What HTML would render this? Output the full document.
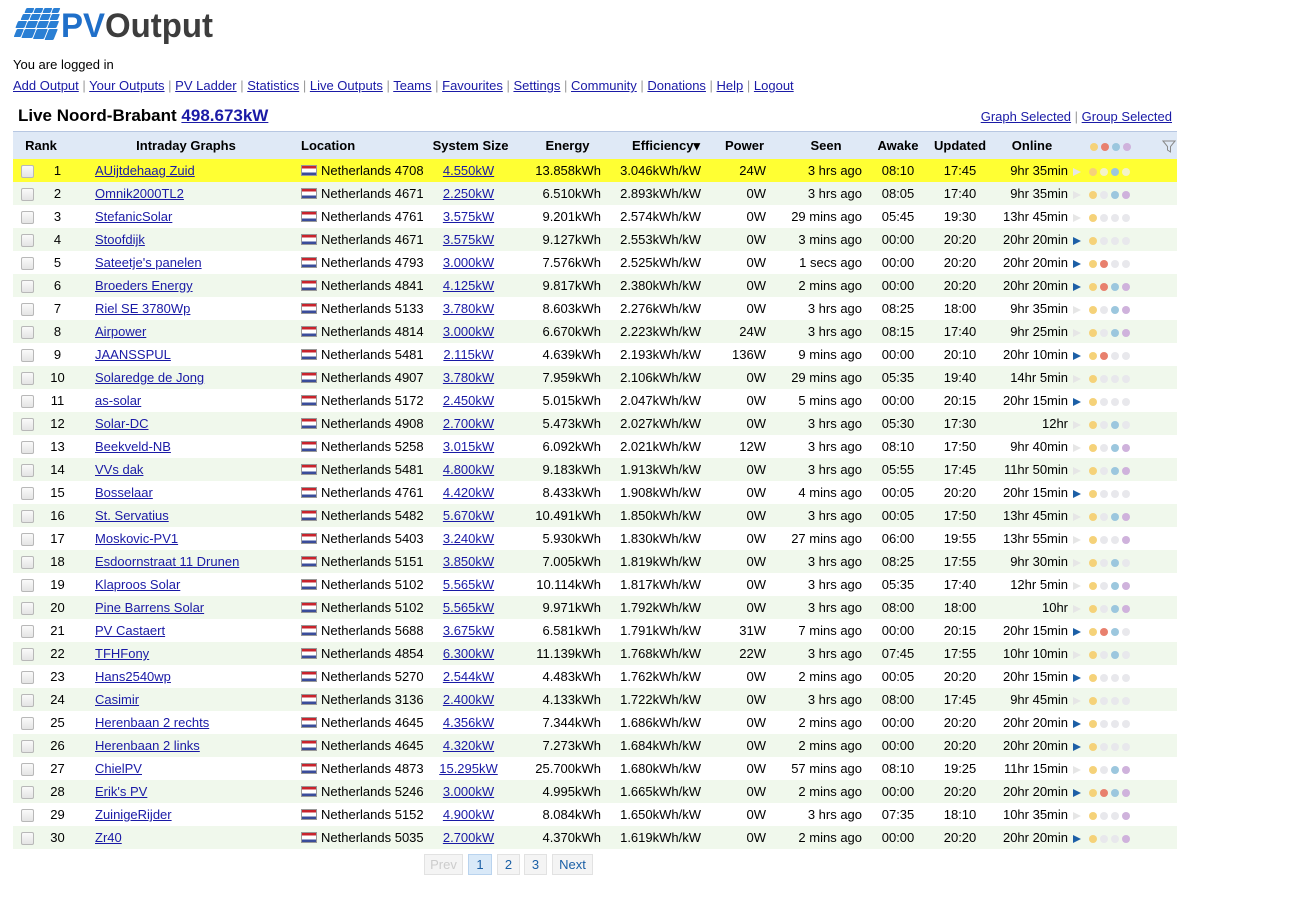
<!DOCTYPE html>
<html><head><meta charset="utf-8"><style>
body{margin:0;font-family:"Liberation Sans",Arial,sans-serif;font-size:13px;color:#000;background:#fff}
a{color:#1a1aa6}
#logo{position:absolute;left:10px;top:4px}
#logged{position:absolute;left:13px;top:57px}
#nav{position:absolute;left:13px;top:78px;color:#999}
#nav a{color:#1a1aa6}
#title{position:absolute;left:18px;top:106px;font-size:17px;font-weight:bold}
#title a{color:#1a1aa6}
#rlinks{position:absolute;right:120px;top:109px;color:#999}
table{position:absolute;left:13px;top:131px;width:1164px;border-collapse:collapse;table-layout:fixed}
th{background:#dfe9f6;height:27px;font-weight:bold;text-align:center;border-top:1px solid #b7c7e2;padding:0;font-size:13px}
td{height:23px;padding:0;white-space:nowrap;overflow:hidden}
tr:nth-child(odd) td{background:#f0f8ec}
tr.hl td{background:#ffff33!important}
.r{text-align:right;padding-right:6px}
.c{text-align:center}
.cb{display:inline-block;width:11px;height:11px;border:1px solid #b8b8b8;border-radius:2px;background:linear-gradient(#fafafa,#e4e4e4);margin-left:8px;vertical-align:middle}
.fl{display:inline-block;width:16px;height:11px;vertical-align:-1px;margin-right:4px;background:linear-gradient(#c8232c 0,#c8232c 33%,#fff 33%,#fff 66%,#3a4c9a 66%);box-shadow:0 0 0 1px #999 inset}
.ar{display:inline-block;width:0;height:0;border-left:8px solid #e6e6e6;border-top:4px solid transparent;border-bottom:4px solid transparent;margin:0 8px 0 1px;vertical-align:middle}
.ar.A{border-left-color:#1c5fa6}
.d{display:inline-block;width:8px;height:8px;border-radius:50%;margin-right:3px;vertical-align:middle;background:#e8e8ec}
.Y{background:#f5d279}.R{background:#e8806e}.B{background:#9cc7de}.P{background:#cfb2dc}
.hl .d.g{background:#f4f4c8}
#pager{position:absolute;top:854px;left:424px}
#pager span{position:absolute;top:0;height:19px;line-height:19px;border:1px solid #e2e2e2;background:#f4f4f4;text-align:center;color:#1a5fa6;font-size:13px}
</style></head><body>
<svg id="logo" width="210" height="40" viewBox="0 0 210 40">
<g transform="skewX(-22)">
<g fill="#2a7fd4">
<rect x="18" y="4" width="8" height="5" rx="1"/><rect x="27" y="4" width="8" height="5" rx="1"/><rect x="36" y="4" width="8" height="5" rx="1"/><rect x="45" y="4" width="7" height="5" rx="1"/>
<rect x="17" y="10" width="8" height="6" rx="1"/><rect x="26" y="10" width="9" height="6" rx="1"/><rect x="36" y="10" width="9" height="6" rx="1"/><rect x="46" y="10" width="8" height="6" rx="1"/>
<rect x="15" y="17" width="9" height="7" rx="1"/><rect x="25" y="17" width="10" height="7" rx="1"/><rect x="36" y="17" width="10" height="7" rx="1"/><rect x="47" y="17" width="9" height="7" rx="1"/>
<rect x="17" y="25" width="7" height="8" rx="1"/><rect x="25" y="25" width="11" height="9" rx="1"/><rect x="37" y="25" width="11" height="10" rx="1"/><rect x="49" y="25" width="9" height="11" rx="1"/>
</g></g>
<text x="51" y="33" font-family="Liberation Sans,Arial,sans-serif" font-weight="bold" font-size="34" fill="#1f6fc9" textLength="152" lengthAdjust="spacingAndGlyphs">PV<tspan fill="#3d3d3d">Output</tspan></text>
</svg>
<div id="logged">You are logged in</div>
<div id="nav"><a href="#">Add Output</a> | <a href="#">Your Outputs</a> | <a href="#">PV Ladder</a> | <a href="#">Statistics</a> | <a href="#">Live Outputs</a> | <a href="#">Teams</a> | <a href="#">Favourites</a> | <a href="#">Settings</a> | <a href="#">Community</a> | <a href="#">Donations</a> | <a href="#">Help</a> | <a href="#">Logout</a></div>
<div id="title">Live Noord-Brabant <a href="#">498.673kW</a></div>
<div id="rlinks"><a href="#">Graph Selected</a> | <a href="#">Group Selected</a></div>
<table>
<colgroup><col style="width:27px"><col style="width:35px"><col style="width:222px"><col style="width:128px"><col style="width:87px"><col style="width:95px"><col style="width:100px"><col style="width:65px"><col style="width:96px"><col style="width:60px"><col style="width:64px"><col style="width:80px"><col style="width:105px"></colgroup>
<tr><th colspan="2" style="padding-right:6px">Rank</th><th>Intraday Graphs</th><th style="text-align:left;padding-left:4px">Location</th><th style="padding-left:4px">System Size</th><th style="padding-left:16px">Energy</th><th style="padding-left:18px">Efficiency▾</th><th style="padding-left:10px">Power</th><th style="padding-left:12px">Seen</th><th>Awake</th><th>Updated</th><th>Online</th><th style="text-align:left;padding-left:18px"><span class="d Y"></span><span class="d R"></span><span class="d B"></span><span class="d P"></span><svg width="14" height="13" style="margin-left:28px;vertical-align:middle" viewBox="0 0 14 13"><path d="M1 1h12L8.5 6.5V12L5.5 10V6.5Z" fill="none" stroke="#888"/></svg></th></tr>
<tr class="hl"><td><span class="cb"></span></td><td class="c">1</td><td style="padding-left:20px"><a href="#">AUijtdehaag Zuid</a></td><td style="padding-left:4px"><span class="fl"></span>Netherlands 4708</td><td class="c"><a href="#">4.550kW</a></td><td class="r">13.858kWh</td><td class="r">3.046kWh/kW</td><td class="r">24W</td><td class="r">3 hrs ago</td><td class="c">08:10</td><td class="c">17:45</td><td class="r" style="padding-right:4px">9hr 35min</td><td><span class="ar"></span><span class="d Y"></span><span class="d g"></span><span class="d B"></span><span class="d g"></span></td></tr>
<tr><td><span class="cb"></span></td><td class="c">2</td><td style="padding-left:20px"><a href="#">Omnik2000TL2</a></td><td style="padding-left:4px"><span class="fl"></span>Netherlands 4671</td><td class="c"><a href="#">2.250kW</a></td><td class="r">6.510kWh</td><td class="r">2.893kWh/kW</td><td class="r">0W</td><td class="r">3 hrs ago</td><td class="c">08:05</td><td class="c">17:40</td><td class="r" style="padding-right:4px">9hr 35min</td><td><span class="ar"></span><span class="d Y"></span><span class="d g"></span><span class="d B"></span><span class="d P"></span></td></tr>
<tr><td><span class="cb"></span></td><td class="c">3</td><td style="padding-left:20px"><a href="#">StefanicSolar</a></td><td style="padding-left:4px"><span class="fl"></span>Netherlands 4761</td><td class="c"><a href="#">3.575kW</a></td><td class="r">9.201kWh</td><td class="r">2.574kWh/kW</td><td class="r">0W</td><td class="r">29 mins ago</td><td class="c">05:45</td><td class="c">19:30</td><td class="r" style="padding-right:4px">13hr 45min</td><td><span class="ar"></span><span class="d Y"></span><span class="d g"></span><span class="d g"></span><span class="d g"></span></td></tr>
<tr><td><span class="cb"></span></td><td class="c">4</td><td style="padding-left:20px"><a href="#">Stoofdijk</a></td><td style="padding-left:4px"><span class="fl"></span>Netherlands 4671</td><td class="c"><a href="#">3.575kW</a></td><td class="r">9.127kWh</td><td class="r">2.553kWh/kW</td><td class="r">0W</td><td class="r">3 mins ago</td><td class="c">00:00</td><td class="c">20:20</td><td class="r" style="padding-right:4px">20hr 20min</td><td><span class="ar A"></span><span class="d Y"></span><span class="d g"></span><span class="d g"></span><span class="d g"></span></td></tr>
<tr><td><span class="cb"></span></td><td class="c">5</td><td style="padding-left:20px"><a href="#">Sateetje's panelen</a></td><td style="padding-left:4px"><span class="fl"></span>Netherlands 4793</td><td class="c"><a href="#">3.000kW</a></td><td class="r">7.576kWh</td><td class="r">2.525kWh/kW</td><td class="r">0W</td><td class="r">1 secs ago</td><td class="c">00:00</td><td class="c">20:20</td><td class="r" style="padding-right:4px">20hr 20min</td><td><span class="ar A"></span><span class="d Y"></span><span class="d R"></span><span class="d g"></span><span class="d g"></span></td></tr>
<tr><td><span class="cb"></span></td><td class="c">6</td><td style="padding-left:20px"><a href="#">Broeders Energy</a></td><td style="padding-left:4px"><span class="fl"></span>Netherlands 4841</td><td class="c"><a href="#">4.125kW</a></td><td class="r">9.817kWh</td><td class="r">2.380kWh/kW</td><td class="r">0W</td><td class="r">2 mins ago</td><td class="c">00:00</td><td class="c">20:20</td><td class="r" style="padding-right:4px">20hr 20min</td><td><span class="ar A"></span><span class="d Y"></span><span class="d R"></span><span class="d B"></span><span class="d P"></span></td></tr>
<tr><td><span class="cb"></span></td><td class="c">7</td><td style="padding-left:20px"><a href="#">Riel SE 3780Wp</a></td><td style="padding-left:4px"><span class="fl"></span>Netherlands 5133</td><td class="c"><a href="#">3.780kW</a></td><td class="r">8.603kWh</td><td class="r">2.276kWh/kW</td><td class="r">0W</td><td class="r">3 hrs ago</td><td class="c">08:25</td><td class="c">18:00</td><td class="r" style="padding-right:4px">9hr 35min</td><td><span class="ar"></span><span class="d Y"></span><span class="d g"></span><span class="d B"></span><span class="d P"></span></td></tr>
<tr><td><span class="cb"></span></td><td class="c">8</td><td style="padding-left:20px"><a href="#">Airpower</a></td><td style="padding-left:4px"><span class="fl"></span>Netherlands 4814</td><td class="c"><a href="#">3.000kW</a></td><td class="r">6.670kWh</td><td class="r">2.223kWh/kW</td><td class="r">24W</td><td class="r">3 hrs ago</td><td class="c">08:15</td><td class="c">17:40</td><td class="r" style="padding-right:4px">9hr 25min</td><td><span class="ar"></span><span class="d Y"></span><span class="d g"></span><span class="d B"></span><span class="d P"></span></td></tr>
<tr><td><span class="cb"></span></td><td class="c">9</td><td style="padding-left:20px"><a href="#">JAANSSPUL</a></td><td style="padding-left:4px"><span class="fl"></span>Netherlands 5481</td><td class="c"><a href="#">2.115kW</a></td><td class="r">4.639kWh</td><td class="r">2.193kWh/kW</td><td class="r">136W</td><td class="r">9 mins ago</td><td class="c">00:00</td><td class="c">20:10</td><td class="r" style="padding-right:4px">20hr 10min</td><td><span class="ar A"></span><span class="d Y"></span><span class="d R"></span><span class="d g"></span><span class="d g"></span></td></tr>
<tr><td><span class="cb"></span></td><td class="c">10</td><td style="padding-left:20px"><a href="#">Solaredge de Jong</a></td><td style="padding-left:4px"><span class="fl"></span>Netherlands 4907</td><td class="c"><a href="#">3.780kW</a></td><td class="r">7.959kWh</td><td class="r">2.106kWh/kW</td><td class="r">0W</td><td class="r">29 mins ago</td><td class="c">05:35</td><td class="c">19:40</td><td class="r" style="padding-right:4px">14hr 5min</td><td><span class="ar"></span><span class="d Y"></span><span class="d g"></span><span class="d g"></span><span class="d g"></span></td></tr>
<tr><td><span class="cb"></span></td><td class="c">11</td><td style="padding-left:20px"><a href="#">as-solar</a></td><td style="padding-left:4px"><span class="fl"></span>Netherlands 5172</td><td class="c"><a href="#">2.450kW</a></td><td class="r">5.015kWh</td><td class="r">2.047kWh/kW</td><td class="r">0W</td><td class="r">5 mins ago</td><td class="c">00:00</td><td class="c">20:15</td><td class="r" style="padding-right:4px">20hr 15min</td><td><span class="ar A"></span><span class="d Y"></span><span class="d g"></span><span class="d g"></span><span class="d g"></span></td></tr>
<tr><td><span class="cb"></span></td><td class="c">12</td><td style="padding-left:20px"><a href="#">Solar-DC</a></td><td style="padding-left:4px"><span class="fl"></span>Netherlands 4908</td><td class="c"><a href="#">2.700kW</a></td><td class="r">5.473kWh</td><td class="r">2.027kWh/kW</td><td class="r">0W</td><td class="r">3 hrs ago</td><td class="c">05:30</td><td class="c">17:30</td><td class="r" style="padding-right:4px">12hr</td><td><span class="ar"></span><span class="d Y"></span><span class="d g"></span><span class="d B"></span><span class="d g"></span></td></tr>
<tr><td><span class="cb"></span></td><td class="c">13</td><td style="padding-left:20px"><a href="#">Beekveld-NB</a></td><td style="padding-left:4px"><span class="fl"></span>Netherlands 5258</td><td class="c"><a href="#">3.015kW</a></td><td class="r">6.092kWh</td><td class="r">2.021kWh/kW</td><td class="r">12W</td><td class="r">3 hrs ago</td><td class="c">08:10</td><td class="c">17:50</td><td class="r" style="padding-right:4px">9hr 40min</td><td><span class="ar"></span><span class="d Y"></span><span class="d g"></span><span class="d B"></span><span class="d P"></span></td></tr>
<tr><td><span class="cb"></span></td><td class="c">14</td><td style="padding-left:20px"><a href="#">VVs dak</a></td><td style="padding-left:4px"><span class="fl"></span>Netherlands 5481</td><td class="c"><a href="#">4.800kW</a></td><td class="r">9.183kWh</td><td class="r">1.913kWh/kW</td><td class="r">0W</td><td class="r">3 hrs ago</td><td class="c">05:55</td><td class="c">17:45</td><td class="r" style="padding-right:4px">11hr 50min</td><td><span class="ar"></span><span class="d Y"></span><span class="d g"></span><span class="d B"></span><span class="d P"></span></td></tr>
<tr><td><span class="cb"></span></td><td class="c">15</td><td style="padding-left:20px"><a href="#">Bosselaar</a></td><td style="padding-left:4px"><span class="fl"></span>Netherlands 4761</td><td class="c"><a href="#">4.420kW</a></td><td class="r">8.433kWh</td><td class="r">1.908kWh/kW</td><td class="r">0W</td><td class="r">4 mins ago</td><td class="c">00:05</td><td class="c">20:20</td><td class="r" style="padding-right:4px">20hr 15min</td><td><span class="ar A"></span><span class="d Y"></span><span class="d g"></span><span class="d g"></span><span class="d g"></span></td></tr>
<tr><td><span class="cb"></span></td><td class="c">16</td><td style="padding-left:20px"><a href="#">St. Servatius</a></td><td style="padding-left:4px"><span class="fl"></span>Netherlands 5482</td><td class="c"><a href="#">5.670kW</a></td><td class="r">10.491kWh</td><td class="r">1.850kWh/kW</td><td class="r">0W</td><td class="r">3 hrs ago</td><td class="c">00:05</td><td class="c">17:50</td><td class="r" style="padding-right:4px">13hr 45min</td><td><span class="ar"></span><span class="d Y"></span><span class="d g"></span><span class="d B"></span><span class="d P"></span></td></tr>
<tr><td><span class="cb"></span></td><td class="c">17</td><td style="padding-left:20px"><a href="#">Moskovic-PV1</a></td><td style="padding-left:4px"><span class="fl"></span>Netherlands 5403</td><td class="c"><a href="#">3.240kW</a></td><td class="r">5.930kWh</td><td class="r">1.830kWh/kW</td><td class="r">0W</td><td class="r">27 mins ago</td><td class="c">06:00</td><td class="c">19:55</td><td class="r" style="padding-right:4px">13hr 55min</td><td><span class="ar"></span><span class="d Y"></span><span class="d g"></span><span class="d g"></span><span class="d P"></span></td></tr>
<tr><td><span class="cb"></span></td><td class="c">18</td><td style="padding-left:20px"><a href="#">Esdoornstraat 11 Drunen</a></td><td style="padding-left:4px"><span class="fl"></span>Netherlands 5151</td><td class="c"><a href="#">3.850kW</a></td><td class="r">7.005kWh</td><td class="r">1.819kWh/kW</td><td class="r">0W</td><td class="r">3 hrs ago</td><td class="c">08:25</td><td class="c">17:55</td><td class="r" style="padding-right:4px">9hr 30min</td><td><span class="ar"></span><span class="d Y"></span><span class="d g"></span><span class="d B"></span><span class="d g"></span></td></tr>
<tr><td><span class="cb"></span></td><td class="c">19</td><td style="padding-left:20px"><a href="#">Klaproos Solar</a></td><td style="padding-left:4px"><span class="fl"></span>Netherlands 5102</td><td class="c"><a href="#">5.565kW</a></td><td class="r">10.114kWh</td><td class="r">1.817kWh/kW</td><td class="r">0W</td><td class="r">3 hrs ago</td><td class="c">05:35</td><td class="c">17:40</td><td class="r" style="padding-right:4px">12hr 5min</td><td><span class="ar"></span><span class="d Y"></span><span class="d g"></span><span class="d B"></span><span class="d P"></span></td></tr>
<tr><td><span class="cb"></span></td><td class="c">20</td><td style="padding-left:20px"><a href="#">Pine Barrens Solar</a></td><td style="padding-left:4px"><span class="fl"></span>Netherlands 5102</td><td class="c"><a href="#">5.565kW</a></td><td class="r">9.971kWh</td><td class="r">1.792kWh/kW</td><td class="r">0W</td><td class="r">3 hrs ago</td><td class="c">08:00</td><td class="c">18:00</td><td class="r" style="padding-right:4px">10hr</td><td><span class="ar"></span><span class="d Y"></span><span class="d g"></span><span class="d B"></span><span class="d P"></span></td></tr>
<tr><td><span class="cb"></span></td><td class="c">21</td><td style="padding-left:20px"><a href="#">PV Castaert</a></td><td style="padding-left:4px"><span class="fl"></span>Netherlands 5688</td><td class="c"><a href="#">3.675kW</a></td><td class="r">6.581kWh</td><td class="r">1.791kWh/kW</td><td class="r">31W</td><td class="r">7 mins ago</td><td class="c">00:00</td><td class="c">20:15</td><td class="r" style="padding-right:4px">20hr 15min</td><td><span class="ar A"></span><span class="d Y"></span><span class="d R"></span><span class="d B"></span><span class="d g"></span></td></tr>
<tr><td><span class="cb"></span></td><td class="c">22</td><td style="padding-left:20px"><a href="#">TFHFony</a></td><td style="padding-left:4px"><span class="fl"></span>Netherlands 4854</td><td class="c"><a href="#">6.300kW</a></td><td class="r">11.139kWh</td><td class="r">1.768kWh/kW</td><td class="r">22W</td><td class="r">3 hrs ago</td><td class="c">07:45</td><td class="c">17:55</td><td class="r" style="padding-right:4px">10hr 10min</td><td><span class="ar"></span><span class="d Y"></span><span class="d g"></span><span class="d B"></span><span class="d g"></span></td></tr>
<tr><td><span class="cb"></span></td><td class="c">23</td><td style="padding-left:20px"><a href="#">Hans2540wp</a></td><td style="padding-left:4px"><span class="fl"></span>Netherlands 5270</td><td class="c"><a href="#">2.544kW</a></td><td class="r">4.483kWh</td><td class="r">1.762kWh/kW</td><td class="r">0W</td><td class="r">2 mins ago</td><td class="c">00:05</td><td class="c">20:20</td><td class="r" style="padding-right:4px">20hr 15min</td><td><span class="ar A"></span><span class="d Y"></span><span class="d g"></span><span class="d g"></span><span class="d g"></span></td></tr>
<tr><td><span class="cb"></span></td><td class="c">24</td><td style="padding-left:20px"><a href="#">Casimir</a></td><td style="padding-left:4px"><span class="fl"></span>Netherlands 3136</td><td class="c"><a href="#">2.400kW</a></td><td class="r">4.133kWh</td><td class="r">1.722kWh/kW</td><td class="r">0W</td><td class="r">3 hrs ago</td><td class="c">08:00</td><td class="c">17:45</td><td class="r" style="padding-right:4px">9hr 45min</td><td><span class="ar"></span><span class="d Y"></span><span class="d g"></span><span class="d g"></span><span class="d g"></span></td></tr>
<tr><td><span class="cb"></span></td><td class="c">25</td><td style="padding-left:20px"><a href="#">Herenbaan 2 rechts</a></td><td style="padding-left:4px"><span class="fl"></span>Netherlands 4645</td><td class="c"><a href="#">4.356kW</a></td><td class="r">7.344kWh</td><td class="r">1.686kWh/kW</td><td class="r">0W</td><td class="r">2 mins ago</td><td class="c">00:00</td><td class="c">20:20</td><td class="r" style="padding-right:4px">20hr 20min</td><td><span class="ar A"></span><span class="d Y"></span><span class="d g"></span><span class="d g"></span><span class="d g"></span></td></tr>
<tr><td><span class="cb"></span></td><td class="c">26</td><td style="padding-left:20px"><a href="#">Herenbaan 2 links</a></td><td style="padding-left:4px"><span class="fl"></span>Netherlands 4645</td><td class="c"><a href="#">4.320kW</a></td><td class="r">7.273kWh</td><td class="r">1.684kWh/kW</td><td class="r">0W</td><td class="r">2 mins ago</td><td class="c">00:00</td><td class="c">20:20</td><td class="r" style="padding-right:4px">20hr 20min</td><td><span class="ar A"></span><span class="d Y"></span><span class="d g"></span><span class="d g"></span><span class="d g"></span></td></tr>
<tr><td><span class="cb"></span></td><td class="c">27</td><td style="padding-left:20px"><a href="#">ChielPV</a></td><td style="padding-left:4px"><span class="fl"></span>Netherlands 4873</td><td class="c"><a href="#">15.295kW</a></td><td class="r">25.700kWh</td><td class="r">1.680kWh/kW</td><td class="r">0W</td><td class="r">57 mins ago</td><td class="c">08:10</td><td class="c">19:25</td><td class="r" style="padding-right:4px">11hr 15min</td><td><span class="ar"></span><span class="d Y"></span><span class="d g"></span><span class="d B"></span><span class="d P"></span></td></tr>
<tr><td><span class="cb"></span></td><td class="c">28</td><td style="padding-left:20px"><a href="#">Erik's PV</a></td><td style="padding-left:4px"><span class="fl"></span>Netherlands 5246</td><td class="c"><a href="#">3.000kW</a></td><td class="r">4.995kWh</td><td class="r">1.665kWh/kW</td><td class="r">0W</td><td class="r">2 mins ago</td><td class="c">00:00</td><td class="c">20:20</td><td class="r" style="padding-right:4px">20hr 20min</td><td><span class="ar A"></span><span class="d Y"></span><span class="d R"></span><span class="d B"></span><span class="d P"></span></td></tr>
<tr><td><span class="cb"></span></td><td class="c">29</td><td style="padding-left:20px"><a href="#">ZuinigeRijder</a></td><td style="padding-left:4px"><span class="fl"></span>Netherlands 5152</td><td class="c"><a href="#">4.900kW</a></td><td class="r">8.084kWh</td><td class="r">1.650kWh/kW</td><td class="r">0W</td><td class="r">3 hrs ago</td><td class="c">07:35</td><td class="c">18:10</td><td class="r" style="padding-right:4px">10hr 35min</td><td><span class="ar"></span><span class="d Y"></span><span class="d g"></span><span class="d g"></span><span class="d P"></span></td></tr>
<tr><td><span class="cb"></span></td><td class="c">30</td><td style="padding-left:20px"><a href="#">Zr40</a></td><td style="padding-left:4px"><span class="fl"></span>Netherlands 5035</td><td class="c"><a href="#">2.700kW</a></td><td class="r">4.370kWh</td><td class="r">1.619kWh/kW</td><td class="r">0W</td><td class="r">2 mins ago</td><td class="c">00:00</td><td class="c">20:20</td><td class="r" style="padding-right:4px">20hr 20min</td><td><span class="ar A"></span><span class="d Y"></span><span class="d g"></span><span class="d g"></span><span class="d P"></span></td></tr>
</table>
<div id="pager">
<span style="left:0;width:37px;color:#ccc">Prev</span>
<span style="left:44px;width:22px;background:#d9e9f8;border-color:#b9d3ee">1</span>
<span style="left:73px;width:21px">2</span>
<span style="left:100px;width:21px">3</span>
<span style="left:128px;width:39px">Next</span>
</div>
</body></html>
